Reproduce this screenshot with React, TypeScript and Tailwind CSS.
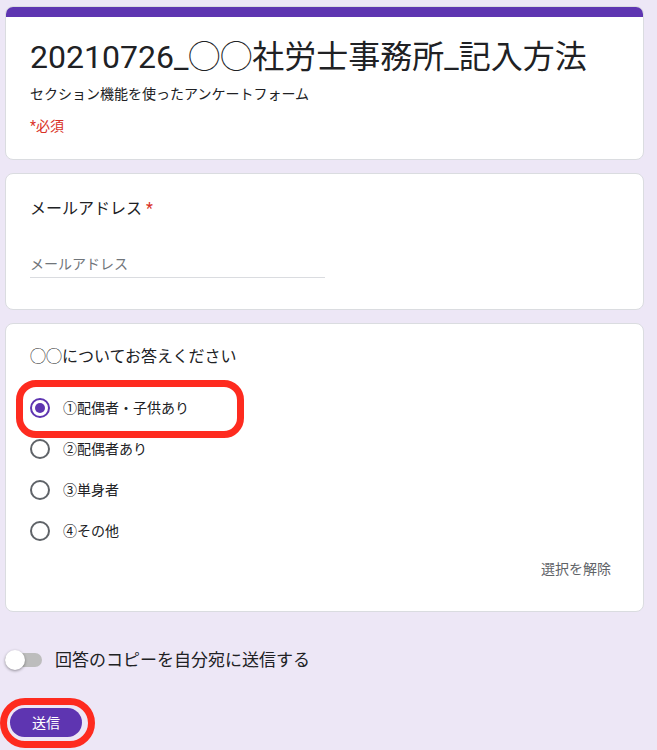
const font = { fontFamily: 'Roboto, "Noto Sans CJK JP", sans-serif' };

const options = ["①配偶者・子供あり", "②配偶者あり", "③単身者", "④その他"];

function Radio({ checked }: { checked?: boolean }) {
  return (
    <span
      className={
        "flex h-5 w-5 shrink-0 items-center justify-center rounded-full border-2 " +
        (checked ? "border-[#5e35b1]" : "border-[#5f6368]")
      }
    >
      {checked && <span className="h-[10px] w-[10px] rounded-full bg-[#5e35b1]"></span>}
    </span>
  );
}

export default function App() {
  return (
    <div className="min-h-[750px] w-full bg-[#ede7f6] pl-[5px] pt-[6px] text-[#202124]" style={font}>
      <div className="flex w-[639px] flex-col gap-[13px]">
        {/* header card */}
        <div className="overflow-hidden rounded-lg border border-[#dadce0] bg-white">
          <div className="h-[10px] bg-[#5e35b1]"></div>
          <div className="px-[24px] pb-[23px] pt-[20px]">
            <h1 className="text-[32px] leading-[40px]">20210726_◯◯社労士事務所_記入方法</h1>
            <p className="mt-[7px] text-sm leading-5">セクション機能を使ったアンケートフォーム</p>
            <p className="mt-[12px] text-sm leading-5 text-[#d93025]">*必須</p>
          </div>
        </div>

        {/* email card */}
        <div className="rounded-lg border border-[#dadce0] bg-white px-[24px] pb-[31px] pt-[23px]">
          <div className="text-base leading-6">
            メールアドレス <span className="text-[#d93025]">*</span>
          </div>
          <div className="mt-[33px] w-[295px] border-b border-[#dadce0] pb-[3px] text-sm leading-5 text-[#70757a]">
            メールアドレス
          </div>
        </div>

        {/* question card */}
        <div className="relative rounded-lg border border-[#dadce0] bg-white px-[24px] pb-[32px] pt-[21px]">
          <div className="text-base leading-6">◯◯についてお答えください</div>
          <div className="mt-[18px] flex flex-col">
            {options.map((o, i) => (
              <div key={o} className="flex h-[41px] items-center gap-[13px]">
                <Radio checked={i === 0} />
                <span className="text-sm">{o}</span>
              </div>
            ))}
          </div>
          <div className="mt-[8px] flex justify-end pr-[8px] text-sm leading-5 text-[#5f6368]">選択を解除</div>
          <div className="absolute left-[10px] top-[56px] h-[58px] w-[228px] rounded-[20px] border-[7px] border-[#fe2b1f]"></div>
        </div>
      </div>

      {/* copy toggle */}
      <div className="mt-[36px] flex h-6 items-center gap-[13px]">
        <div className="relative h-[14px] w-[37px] rounded-full bg-[#bdbdbd]">
          <span className="absolute left-0 top-[-3px] h-5 w-5 rounded-full bg-white shadow-[0_1px_3px_rgba(0,0,0,0.4)]"></span>
        </div>
        <span className="text-[17px] leading-6">回答のコピーを自分宛に送信する</span>
      </div>

      {/* submit */}
      <div className="relative mt-[36px] h-[29px] w-[72px] translate-x-[5px]">
        <button className="h-[29px] w-[72px] rounded-full bg-[#5e35b1] text-sm text-white">送信</button>
        <div className="absolute left-[-10px] top-[-10px] h-[50px] w-[95px] rounded-full border-[7px] border-[#fe2b1f]"></div>
      </div>
    </div>
  );
}
